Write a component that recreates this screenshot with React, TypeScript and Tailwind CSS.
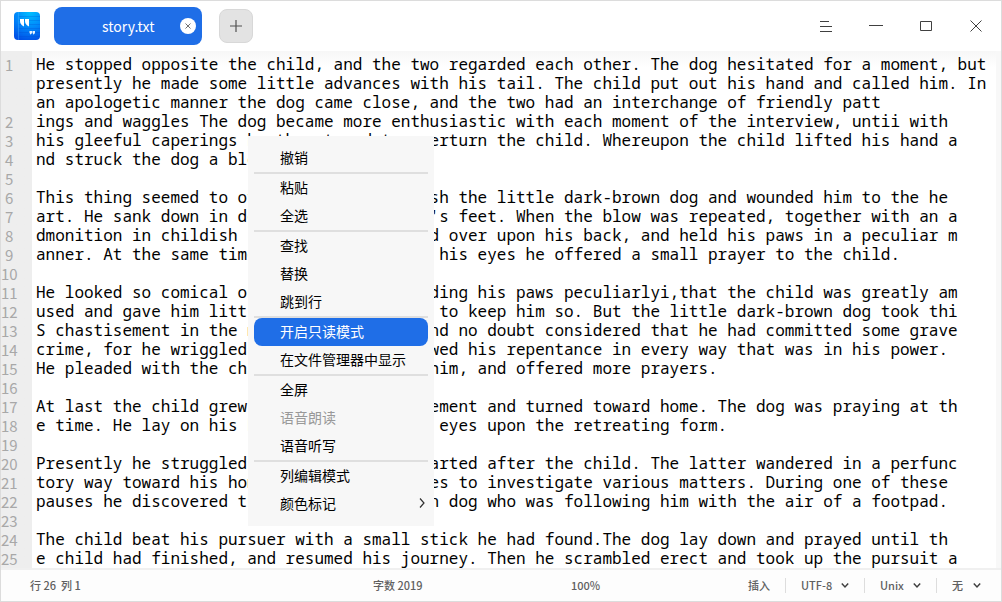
import { Fragment } from "react";

type Row = { n?: number; text: string };

const rows: Row[] = [
  { n: 1, text: "He stopped opposite the child, and the two regarded each other. The dog hesitated for a moment, but" },
  { text: "presently he made some little advances with his tail. The child put out his hand and called him. In" },
  { text: "an apologetic manner the dog came close, and the two had an interchange of friendly patt" },
  { n: 2, text: "ings and waggles The dog became more enthusiastic with each moment of the interview, untii with" },
  { n: 3, text: "his gleeful caperings he threatened to overturn the child. Whereupon the child lifted his hand a" },
  { n: 4, text: "nd struck the dog a blow upon the head." },
  { n: 5, text: "" },
  { n: 6, text: "This thing seemed to overpower and astonish the little dark-brown dog and wounded him to the he" },
  { n: 7, text: "art. He sank down in despair at the child's feet. When the blow was repeated, together with an a" },
  { n: 8, text: "dmonition in childish sentences, he turned over upon his back, and held his paws in a peculiar m" },
  { n: 9, text: "anner. At the same time with his ears and his eyes he offered a small prayer to the child." },
  { n: 10, text: "" },
  { n: 11, text: "He looked so comical on his back, and holding his paws peculiarlyi,that the child was greatly am" },
  { n: 12, text: "used and gave him little taps repeatedly, to keep him so. But the little dark-brown dog took thi" },
  { n: 13, text: "S chastisement in the most serious way, and no doubt considered that he had committed some grave" },
  { n: 14, text: "crime, for he wriggled contritely and showed his repentance in every way that was in his power." },
  { n: 15, text: "He pleaded with the child and petitioned him, and offered more prayers." },
  { n: 16, text: "" },
  { n: 17, text: "At last the child grew weary of this amusement and turned toward home. The dog was praying at th" },
  { n: 18, text: "e time. He lay on his back and turned his eyes upon the retreating form." },
  { n: 19, text: "" },
  { n: 20, text: "Presently he struggled to his feet and started after the child. The latter wandered in a perfunc" },
  { n: 21, text: "tory way toward his home, stopping at times to investigate various matters. During one of these" },
  { n: 22, text: "pauses he discovered the little dark-brown dog who was following him with the air of a footpad." },
  { n: 23, text: "" },
  { n: 24, text: "The child beat his pursuer with a small stick he had found.The dog lay down and prayed until th" },
  { n: 25, text: "e child had finished, and resumed his journey. Then he scrambled erect and took up the pursuit a" },
];

type Item = { label: string; active?: boolean; disabled?: boolean; submenu?: boolean };

const menuGroups: Item[][] = [
  [{ label: "撤销" }],
  [{ label: "粘贴" }, { label: "全选" }],
  [{ label: "查找" }, { label: "替换" }, { label: "跳到行" }],
  [{ label: "开启只读模式", active: true }, { label: "在文件管理器中显示" }],
  [{ label: "全屏" }, { label: "语音朗读", disabled: true }, { label: "语音听写" }],
  [{ label: "列编辑模式" }, { label: "颜色标记", submenu: true }],
];

function AppLogo() {
  return (
    <svg className="h-7 w-[26px] shrink-0" viewBox="0 0 26 28" aria-hidden="true">
      <defs>
        <radialGradient id="logo" cx="0.62" cy="0" r="1.05">
          <stop offset="0" stopColor="#00c0ff" />
          <stop offset="0.5" stopColor="#008cfb" />
          <stop offset="1" stopColor="#0050e6" />
        </radialGradient>
      </defs>
      <rect width="26" height="28" rx="4" fill="url(#logo)" />
      <path d="M4.500 4.500H26M4.500 8.500H26M4.500 12.500H26M4.500 16.500H26M4.500 20.500H26M4.500 24.500H26" stroke="#0048d0" strokeOpacity="0.25" />
      <path d="M4.500 0v28" stroke="#58b8ff" strokeOpacity="0.35" />
      <path d="M6 7h4v7.500C7.500 13.500 6 11.500 6 9zM11 7h4v7.500C12.500 13.500 11 11.500 11 9z" fill="#fff" />
      <path d="M15.500 19H18v1.500c0 1-.8 1.800-2 2v-1.200h-.5zM18.500 19H21v1.500c0 1-.8 1.800-2 2v-1.200h-.5z" fill="#e6f3ff" />
    </svg>
  );
}

function Select({ label, value, width }: { label: string; value: string; width: string }) {
  return (
    <div className={"relative flex items-center " + width}>
      <select aria-label={label} defaultValue={value} className="w-full appearance-none bg-transparent pr-2.5 outline-none">
        <option>{value}</option>
      </select>
      <svg className="pointer-events-none absolute right-0 h-2 w-2" viewBox="0 0 8 8" fill="none" stroke="#404040" strokeWidth="1.500" aria-hidden="true">
        <path d="M.8 1.500L4 4.900l3.200-3.400" />
      </svg>
    </div>
  );
}

function ContextMenu() {
  return (
    <div
      role="menu"
      className="absolute left-[247px] top-[85px] w-[186px] bg-[#f7f7f7] px-1.5 py-2 text-sm text-black"
    >
      {menuGroups.map((group, g) => (
        <Fragment key={g}>
          {g > 0 && <div role="separator" className="h-0.5 bg-[#dfdfdf]" />}
          {group.map((item) => (
            <button
              key={item.label}
              type="button"
              role="menuitem"
              disabled={item.disabled}
              className={
                "flex h-7 w-full items-center justify-between rounded-lg pb-[3px] pl-[26px] pr-[3px] text-left " +
                (item.active ? "bg-[#1f6ee7] text-white" : item.disabled ? "text-[#999999]" : "")
              }
            >
              {item.label}
              {item.submenu && (
                <svg className="h-3 w-1.5" viewBox="0 0 6 12" fill="none" stroke="#303030" strokeWidth="1.200" aria-hidden="true">
                  <path d="M1 1.500L5 6 1 10.500" />
                </svg>
              )}
            </button>
          ))}
        </Fragment>
      ))}
    </div>
  );
}

const windowButton = "flex size-[50px] items-center justify-center";

export default function App() {
  return (
    <div className="flex min-h-screen flex-col border border-[#dcdcdc] bg-white font-['Noto_Sans_CJK_SC',sans-serif]">
      <header className="flex h-[50px] shrink-0 items-center justify-between pl-[13px]">
        <div className="flex items-center">
          <AppLogo />
          <div className="ml-3.5 flex h-[38px] w-[148px] items-center rounded-lg bg-[#1f6ee7] pl-12 pr-1.5 text-sm text-white">
            <span className="flex-1">story.txt</span>
            <button type="button" aria-label="关闭标签" className="flex size-4 items-center justify-center rounded-full bg-white">
              <svg className="size-2" viewBox="0 0 8 8" stroke="#606060" strokeWidth="0.900" aria-hidden="true">
                <path d="M1.500 1.500l5 5M6.500 1.500l-5 5" />
              </svg>
            </button>
          </div>
          <button
            type="button"
            aria-label="新建标签"
            className="ml-[17px] flex size-[34px] items-center justify-center rounded-lg border border-[#d8d8d8] bg-[#e3e3e3]"
          >
            <svg className="size-3" viewBox="0 0 12 12" stroke="#505050" strokeWidth="1.200" aria-hidden="true">
              <path d="M6 0v12M0 6h12" />
            </svg>
          </button>
        </div>
        <div className="flex items-center">
          <button type="button" aria-label="菜单" className={windowButton}>
            <svg className="h-3 w-3" viewBox="0 0 12 12" stroke="#404040" aria-hidden="true">
              <path d="M0 1.500h9M0 6.500h12M0 11.500h12" />
            </svg>
          </button>
          <button type="button" aria-label="最小化" className={windowButton}>
            <svg className="h-3 w-3.5" viewBox="0 0 14 12" stroke="#404040" aria-hidden="true">
              <path d="M0 5.500h14" />
            </svg>
          </button>
          <button type="button" aria-label="最大化" className={windowButton}>
            <svg className="h-3 w-3" viewBox="0 0 12 12" fill="none" stroke="#404040" aria-hidden="true">
              <path d="M.5 1.500h11v9H.5z" />
            </svg>
          </button>
          <button type="button" aria-label="关闭" className={windowButton}>
            <svg className="h-3 w-3" viewBox="0 0 12 12" stroke="#404040" aria-hidden="true">
              <path d="M.5.500l11 11M11.500.500l-11 11" />
            </svg>
          </button>
        </div>
      </header>

      <main className="relative flex grow overflow-hidden bg-linear-to-b from-[#f7f7f7] to-white to-[16px]">
        <div className="flex grow flex-col bg-linear-to-r from-[#eeeeee] from-[31px] to-transparent to-[31px] pt-1">
          {rows.map((row, i) => (
            <div key={i} className="flex h-[19px] items-center whitespace-pre leading-[19px]">
              <span className="w-[35px] shrink-0 text-[15px] text-[#a8a8a8]">
                <span className={row.n && row.n < 10 ? "pl-1" : ""}>{row.n}</span>
              </span>
              <span className="font-['Noto_Sans_Mono','DejaVu_Sans_Mono',monospace] text-base leading-[19px] text-black">{row.text}</span>
            </div>
          ))}
        </div>
        <div className="w-[5px] shrink-0 bg-[#f8f8f8]" />
        <ContextMenu />
      </main>

      <footer className="flex h-[33px] shrink-0 items-center border-t-2 border-[#f0f0f0] bg-[#fdfdfd] text-[11px] font-medium text-[#606060]">
        <div className="flex-[372]">
          <span className="pl-[29px]">行 26&nbsp; 列 1</span>
        </div>
        <span className="flex-[198]">字数 2019</span>
        <span className="flex-[177]">100%</span>
        <div className="flex flex-[253] items-center">
          <span className="w-[37px] shrink-0">插入</span>
          <span className="h-[15px] w-px shrink-0 bg-[#dddddd]" />
          <span className="w-[15px] shrink-0" />
          <Select label="编码" value="UTF-8" width="w-12 shrink-0" />
          <span className="mx-[15px] h-[15px] w-px shrink-0 bg-[#dddddd]" />
          <Select label="换行符" value="Unix" width="w-[41px] shrink-0" />
          <span className="mx-[15px] h-[15px] w-px shrink-0 bg-[#dddddd]" />
          <Select label="语法" value="无" width="w-[29px] shrink-0" />
        </div>
      </footer>
    </div>
  );
}
